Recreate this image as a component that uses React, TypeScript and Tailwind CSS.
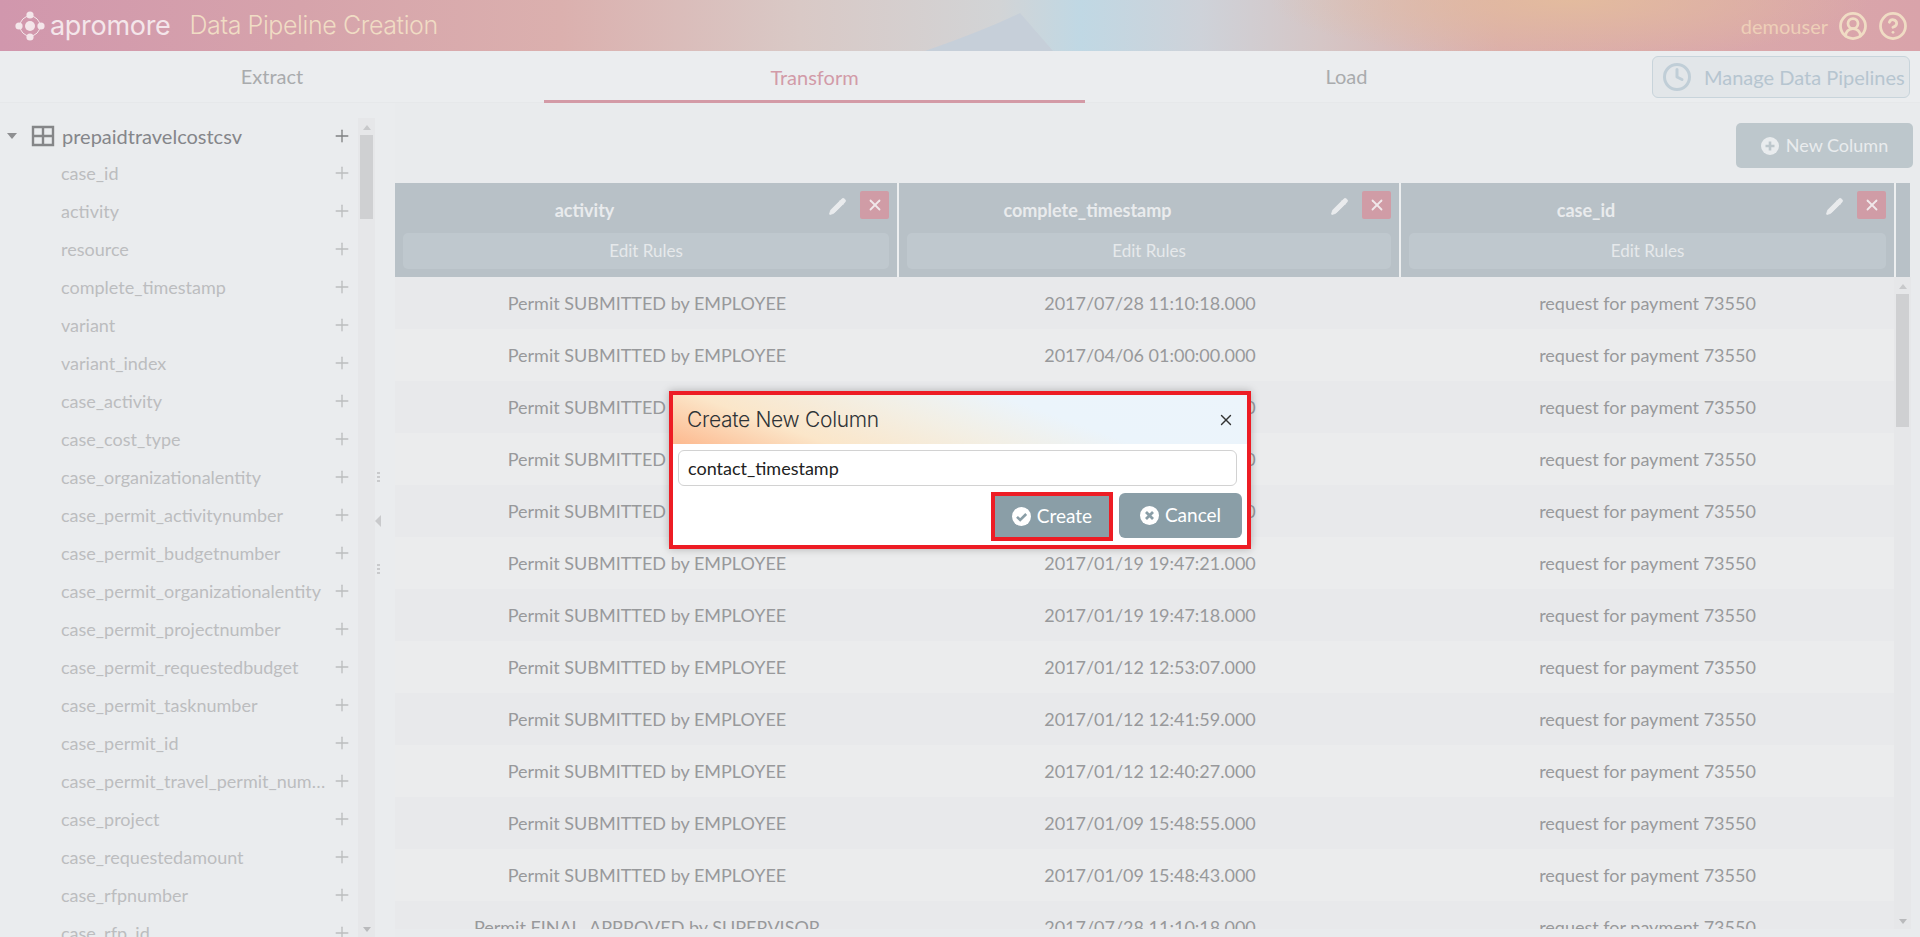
import { CircleUserRound, CircleHelp, Clock, Plus, X, Pencil, ChevronDown } from "lucide-react"

const FONT = "font-['Lato','Liberation_Sans',sans-serif]"

const fields = [
  "case_id", "activity", "resource", "complete_timestamp", "variant", "variant_index", "case_activity",
  "case_cost_type", "case_organizationalentity", "case_permit_activitynumber", "case_permit_budgetnumber",
  "case_permit_organizationalentity", "case_permit_projectnumber", "case_permit_requestedbudget",
  "case_permit_tasknumber", "case_permit_id", "case_permit_travel_permit_number", "case_project",
  "case_requestedamount", "case_rfpnumber", "case_rfp_id",
]

const rows = [
  ["Permit SUBMITTED by EMPLOYEE", "2017/07/28 11:10:18.000"],
  ["Permit SUBMITTED by EMPLOYEE", "2017/04/06 01:00:00.000"],
  ["Permit SUBMITTED by EMPLOYEE", "2017/03/22 10:25:11.000"],
  ["Permit SUBMITTED by EMPLOYEE", "2017/02/14 09:32:40.000"],
  ["Permit SUBMITTED by EMPLOYEE", "2017/02/02 16:04:52.000"],
  ["Permit SUBMITTED by EMPLOYEE", "2017/01/19 19:47:21.000"],
  ["Permit SUBMITTED by EMPLOYEE", "2017/01/19 19:47:18.000"],
  ["Permit SUBMITTED by EMPLOYEE", "2017/01/12 12:53:07.000"],
  ["Permit SUBMITTED by EMPLOYEE", "2017/01/12 12:41:59.000"],
  ["Permit SUBMITTED by EMPLOYEE", "2017/01/12 12:40:27.000"],
  ["Permit SUBMITTED by EMPLOYEE", "2017/01/09 15:48:55.000"],
  ["Permit SUBMITTED by EMPLOYEE", "2017/01/09 15:48:43.000"],
  ["Permit FINAL_APPROVED by SUPERVISOR", "2017/07/28 11:10:18.000"],
]

function Logo() {
  return (
    <svg width="36" height="36" viewBox="0 0 36 36" className="text-[#f4e6ea]">
      <circle cx="18" cy="18" r="10" fill="none" stroke="currentColor" strokeWidth="1" />
      <circle cx="18" cy="18" r="5" fill="currentColor" />
      <circle cx="18" cy="7" r="3.6" fill="currentColor" />
      <circle cx="18" cy="29" r="3.6" fill="currentColor" />
      <circle cx="7" cy="18" r="3.6" fill="currentColor" />
      <circle cx="29" cy="18" r="3.6" fill="currentColor" />
    </svg>
  )
}

function Header() {
  return (
    <div className="relative h-[51px] shrink-0 flex items-center overflow-hidden bg-[radial-gradient(ellipse_300px_60px_at_1570px_0px,#e3bb9e,transparent),linear-gradient(to_right,#d197ad_0px,#d6a3ab_300px,#dbb0ae_560px,#d9c9c6_800px,#d2d4d6_1000px,#c0d8e4_1080px,#ced2d9_1200px,#d5c6c6_1320px,#dbaeab_1500px,#d9a3aa_1920px)]">
      <svg className="absolute left-[925px] top-0" width="130" height="51" viewBox="0 0 130 51">
        <path d="M0 51 Q70 15 129 0 L0 0 Z" fill="#ffffff" fillOpacity="0" />
        <path d="M0 51 Q60 30 95 13 L128 51 Z" fill="#c6cfd9" />
      </svg>
      <div className="relative flex items-center w-full pl-3 pr-[12px]">
        <Logo />
        <span className="ml-[2px] text-[27px] leading-none text-[#f4e6ea] font-['Inter',sans-serif] font-normal tracking-[-0.3px]">apromore</span>
        <span className="ml-[19px] text-[25px] leading-none text-[#f0dcc4] font-['Inter',sans-serif] font-light tracking-[-0.4px]">Data Pipeline Creation</span>
        <span className={`ml-auto text-[20px] text-[#eecfb8] ${FONT}`}>demouser</span>
        <CircleUserRound size={30} strokeWidth={2.2} className="ml-[10px] text-[#f0dcc4]" />
        <CircleHelp size={30} strokeWidth={2.2} className="ml-[10px] text-[#f0dcc4]" />
      </div>
    </div>
  )
}

function Tabs() {
  return (
    <div className="h-[52px] shrink-0 flex items-stretch bg-[#ebedef] border-b border-[#e6e8ea]">
      <div className="w-[544px] flex items-center justify-center text-[20px] text-[#a9abad] pb-[1px]">Extract</div>
      <div className="w-[541px] flex items-center justify-center text-[20px] text-[#d29ba8] border-b-[3px] border-[#d39aa6] mb-[-1px] pt-[2px]">Transform</div>
      <div className="w-[523px] flex items-center justify-center text-[20px] text-[#a9abad] pb-[1px]">Load</div>
      <div className="flex-1 pt-[5px] pl-[44px] pr-[10px]">
        <button className="w-full h-[42px] flex items-center rounded-[6px] border border-[#c8d4db] bg-[#e2e6e9] pl-[9px] text-[20px] text-[#b6c5d0]">
          <Clock size={30} strokeWidth={2.4} className="text-[#c0ced7]" />
          <span className="ml-[12px]">Manage Data Pipelines</span>
        </button>
      </div>
    </div>
  )
}

function Scrollbar({ thumb }: { thumb: string }) {
  return (
    <div className="w-[17px] shrink-0 bg-[#e6e7e9] flex flex-col items-center pt-[7px] pb-[5px]">
      <div className="w-0 h-0 border-x-[4px] border-x-transparent border-b-[5px] border-b-[#c8c9cb]" />
      <div className={`w-[13px] mt-[5px] bg-[#cfd0d2] ${thumb}`} />
      <div className="mt-auto w-0 h-0 border-x-[4px] border-x-transparent border-t-[5px] border-t-[#b9babc]" />
    </div>
  )
}

function Sidebar() {
  return (
    <div className="w-[375px] shrink-0 flex pt-[15px] overflow-hidden">
      <div className="w-[358px] shrink-0 overflow-hidden">
        <div className="h-[36px] flex items-center pr-[6px]">
          <ChevronDown size={0} />
          <div className="ml-[7px] w-0 h-0 border-x-[5px] border-x-transparent border-t-[6px] border-t-[#8e8f91]" />
          <svg width="24" height="24" viewBox="0 0 24 24" className="ml-[14px] text-[#858688]">
            <path d="M2 3h20v18H2zM2 12h20M12 3v18" fill="none" stroke="currentColor" strokeWidth="2.4" />
          </svg>
          <span className="ml-[7px] text-[20px] text-[#85868a]">prepaidtravelcostcsv</span>
          <Plus size={20} strokeWidth={1.6} className="ml-auto text-[#7f8082]" />
        </div>
        {fields.map((name) => (
          <div key={name} className="h-[38px] flex items-center pl-[61px] pr-[6px]">
            <span className="flex-1 min-w-0 truncate text-[18px] text-[#bcbdbf]">{name}</span>
            <Plus size={20} strokeWidth={1.6} className="ml-[6px] shrink-0 text-[#bcbdbf]" />
          </div>
        ))}
      </div>
      <Scrollbar thumb="h-[84px]" />
    </div>
  )
}

function Splitter() {
  return (
    <div className="w-[20px] shrink-0 flex flex-col items-start pl-[2px] pt-[369px]">
      {[0, 1].map((i) => (
        <div key={i} className={`flex flex-col gap-[2px] pl-[0px] ${i === 1 ? "mt-[37px]" : ""}`}>
          <div className="w-[3px] h-[2px] bg-[#c9cacc]" />
          <div className="w-[3px] h-[2px] bg-[#c9cacc]" />
          <div className="w-[3px] h-[2px] bg-[#c9cacc]" />
        </div>
      )).reduce((acc: React.ReactNode[], el, i) => {
        if (i === 1) acc.push(
          <div key="t" className="mt-[33px] -ml-[2px] w-0 h-0 border-y-[6px] border-y-transparent border-r-[6px] border-r-[#c9cacc]" />
        )
        acc.push(el)
        return acc
      }, [])}
    </div>
  )
}

function ColumnHead({ title, className }: { title: string; className: string }) {
  return (
    <div className={`bg-[#b8c1c7] px-[8px] pt-[8px] ${className}`}>
      <div className="h-[34px] flex items-center">
        <span className="flex-1 text-center text-[18px] font-bold text-[#e9ebed] pt-[4px]">{title}</span>
        <div className="w-[123px] flex items-start justify-end self-start">
          <Pencil size={19} fill="#e9ebed" strokeWidth={1.2} className="mt-[6px] text-[#e9ebed]" />
          <div className="ml-[13px] w-[29px] h-[28px] rounded-[2px] bg-[#d09ca6] flex items-center justify-center">
            <X size={18} strokeWidth={2.4} className="text-[#f0e8ea]" />
          </div>
        </div>
      </div>
      <button className="mt-[8px] w-full h-[36px] rounded-[5px] bg-[#bfc8ce] text-[17px] text-[#e6e9eb]">Edit Rules</button>
    </div>
  )
}

function Main() {
  return (
    <div className="flex-1 min-w-0 flex flex-col bg-[#e9ebed]">
      <div className="h-[80px] shrink-0 flex justify-end items-start pt-[20px] pr-[7px]">
        <button className="w-[177px] h-[45px] flex items-center justify-center rounded-[5px] bg-[#bdc7cc] text-[18px] text-[#e9ecee]">
          <svg width="18" height="18" viewBox="0 0 18 18" className="mr-[7px]">
            <circle cx="9" cy="9" r="9" fill="#e9ecee" />
            <path d="M9 4.5v9M4.5 9h9" stroke="#bdc7cc" strokeWidth="2.6" />
          </svg>
          New Column
        </button>
      </div>
      <div className="flex shrink-0 h-[94px] mr-[10px]">
        <ColumnHead title="activity" className="w-[502px] border-r-0" />
        <div className="w-[2px] bg-[#edeff0]" />
        <ColumnHead title="complete_timestamp" className="w-[500px]" />
        <div className="w-[2px] bg-[#edeff0]" />
        <ColumnHead title="case_id" className="flex-1" />
        <div className="w-[2px] bg-[#edeff0]" />
        <div className="w-[14px] bg-[#b8c1c7]" />
      </div>
      <div className="h-[652px] mr-[9px] flex overflow-hidden">
        <div className="flex-1 min-w-0 overflow-hidden">
          {rows.map((r, i) => (
            <div key={i} className={`h-[52px] flex items-center text-[18px] text-[#98999b] ${i % 2 === 0 ? "bg-[#e8e9eb]" : "bg-[#ebeced]"}`}>
              <div className="w-[504px] text-center whitespace-nowrap">{r[0]}</div>
              <div className="w-[502px] text-center whitespace-nowrap">{r[1]}</div>
              <div className="flex-1 text-center whitespace-nowrap">request for payment 73550</div>
            </div>
          ))}
        </div>
        <Scrollbar thumb="h-[133px]" />
      </div>
    </div>
  )
}

function Dialog() {
  return (
    <div className="absolute left-[669px] top-[391px] w-[582px] h-[158px] border-[4px] border-[#ed1c24] bg-white shadow-[0_0_8px_rgba(0,0,0,0.25)]">
      <div className="h-[49px] flex items-center pl-[14px] pr-[12px] bg-[linear-gradient(20deg,#fdb98f_0%,#fbe6c9_22%,#f3efe4_45%,#ebf4fb_65%,#ecf4fb_100%)]">
        <span className="text-[21px] font-['Inter',sans-serif] font-light text-[#2f3336] tracking-[-0.3px]">Create New Column</span>
        <X size={18} strokeWidth={1.8} className="ml-auto text-[#333]" />
      </div>
      <div className="px-[5px] pt-[6px]">
        <div className="h-[36px] rounded-[6px] border border-[#d2d2d2] flex items-center pl-[9px] mr-[5px] text-[18px] text-[#222] leading-none">contact_timestamp</div>
        <div className="flex justify-end mt-[6px] gap-[6px]">
          <button className="w-[122px] h-[49px] border-[4px] border-[#ed1c24] bg-[#8a9ea7] text-white text-[19px] flex items-center justify-center">
            <svg width="19" height="19" viewBox="0 0 19 19" className="mr-[6px]">
              <circle cx="9.5" cy="9.5" r="9.5" fill="#fff" />
              <path d="M5 9.8l3.2 3.2 6-6" fill="none" stroke="#8a9ea7" strokeWidth="2.6" />
            </svg>
            Create
          </button>
          <button className="w-[123px] h-[45px] mt-[1px] rounded-[6px] bg-[#8a9ea7] text-white text-[19px] flex items-center justify-center">
            <svg width="19" height="19" viewBox="0 0 19 19" className="mr-[6px]">
              <circle cx="9.5" cy="9.5" r="9.5" fill="#fff" />
              <path d="M6 6l7 7M13 6l-7 7" fill="none" stroke="#8a9ea7" strokeWidth="2.8" />
            </svg>
            Cancel
          </button>
        </div>
      </div>
    </div>
  )
}

export default function App() {
  return (
    <div className={`relative w-[1920px] h-[937px] overflow-hidden flex flex-col bg-[#eaecee] ${FONT}`}>
      <Header />
      <Tabs />
      <div className="flex-1 min-h-0 flex">
        <Sidebar />
        <Splitter />
        <Main />
      </div>
      <Dialog />
    </div>
  )
}
